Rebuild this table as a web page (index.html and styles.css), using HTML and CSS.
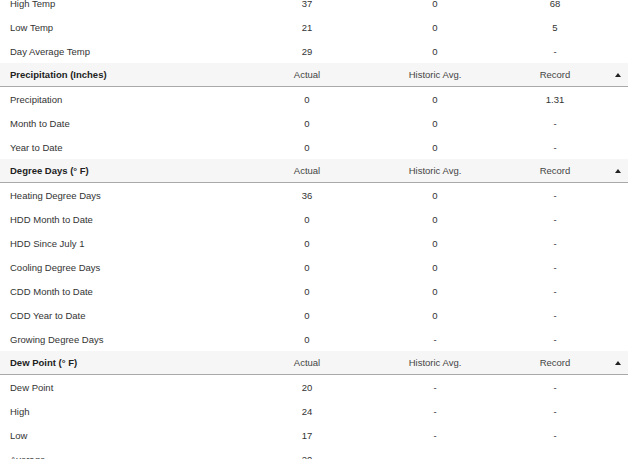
FILE: index.html
```html
<!DOCTYPE html>
<html>
<head>
<meta charset="utf-8">
<link rel="stylesheet" href="styles.css">
</head>
<body>
<div class="table">
  <div class="row"><span class="label">High Temp</span><span>37</span><span>0</span><span>68</span><span></span></div>
  <div class="row"><span class="label">Low Temp</span><span>21</span><span>0</span><span>5</span><span></span></div>
  <div class="row"><span class="label">Day Average Temp</span><span>29</span><span>0</span><span>-</span><span></span></div>

  <div class="row head"><span class="label">Precipitation (Inches)</span><span>Actual</span><span>Historic Avg.</span><span>Record</span><span class="caret"></span></div>
  <div class="row"><span class="label">Precipitation</span><span>0</span><span>0</span><span>1.31</span><span></span></div>
  <div class="row"><span class="label">Month to Date</span><span>0</span><span>0</span><span>-</span><span></span></div>
  <div class="row"><span class="label">Year to Date</span><span>0</span><span>0</span><span>-</span><span></span></div>

  <div class="row head"><span class="label">Degree Days (° F)</span><span>Actual</span><span>Historic Avg.</span><span>Record</span><span class="caret"></span></div>
  <div class="row"><span class="label">Heating Degree Days</span><span>36</span><span>0</span><span>-</span><span></span></div>
  <div class="row"><span class="label">HDD Month to Date</span><span>0</span><span>0</span><span>-</span><span></span></div>
  <div class="row"><span class="label">HDD Since July 1</span><span>0</span><span>0</span><span>-</span><span></span></div>
  <div class="row"><span class="label">Cooling Degree Days</span><span>0</span><span>0</span><span>-</span><span></span></div>
  <div class="row"><span class="label">CDD Month to Date</span><span>0</span><span>0</span><span>-</span><span></span></div>
  <div class="row"><span class="label">CDD Year to Date</span><span>0</span><span>0</span><span>-</span><span></span></div>
  <div class="row"><span class="label">Growing Degree Days</span><span>0</span><span>-</span><span>-</span><span></span></div>

  <div class="row head"><span class="label">Dew Point (° F)</span><span>Actual</span><span>Historic Avg.</span><span>Record</span><span class="caret"></span></div>
  <div class="row"><span class="label">Dew Point</span><span>20</span><span>-</span><span>-</span><span></span></div>
  <div class="row"><span class="label">High</span><span>24</span><span>-</span><span>-</span><span></span></div>
  <div class="row"><span class="label">Low</span><span>17</span><span>-</span><span>-</span><span></span></div>
  <div class="row"><span class="label">Average</span><span>20</span><span>-</span><span>-</span><span></span></div>
</div>
</body>
</html>
```
FILE: styles.css
```css
html, body {
  margin: 0;
  padding: 0;
  background: #fff;
}
body {
  font-family: "Liberation Sans", Arial, sans-serif;
  font-size: 9.5px;
  color: #333;
  overflow: hidden;
}
.table {
  width: 628px;
  margin-top: -9px;
}
.row {
  display: grid;
  grid-template-columns: 246px 122px 134px 106px 20px;
  height: 24px;
  align-items: center;
  text-align: center;
}
.row .label {
  text-align: left;
  padding-left: 10px;
}
.head {
  background: #f6f6f6;
  border-bottom: 1px solid #a9a9a9;
  box-sizing: border-box;
  height: 24px;
  color: #444;
}
.head .label {
  font-weight: bold;
  color: #222;
}
.caret {
  justify-self: center;
  width: 0;
  height: 0;
  border-left: 3px solid transparent;
  border-right: 3px solid transparent;
  border-bottom: 4px solid #222;
  margin-top: 1px;
}
```
